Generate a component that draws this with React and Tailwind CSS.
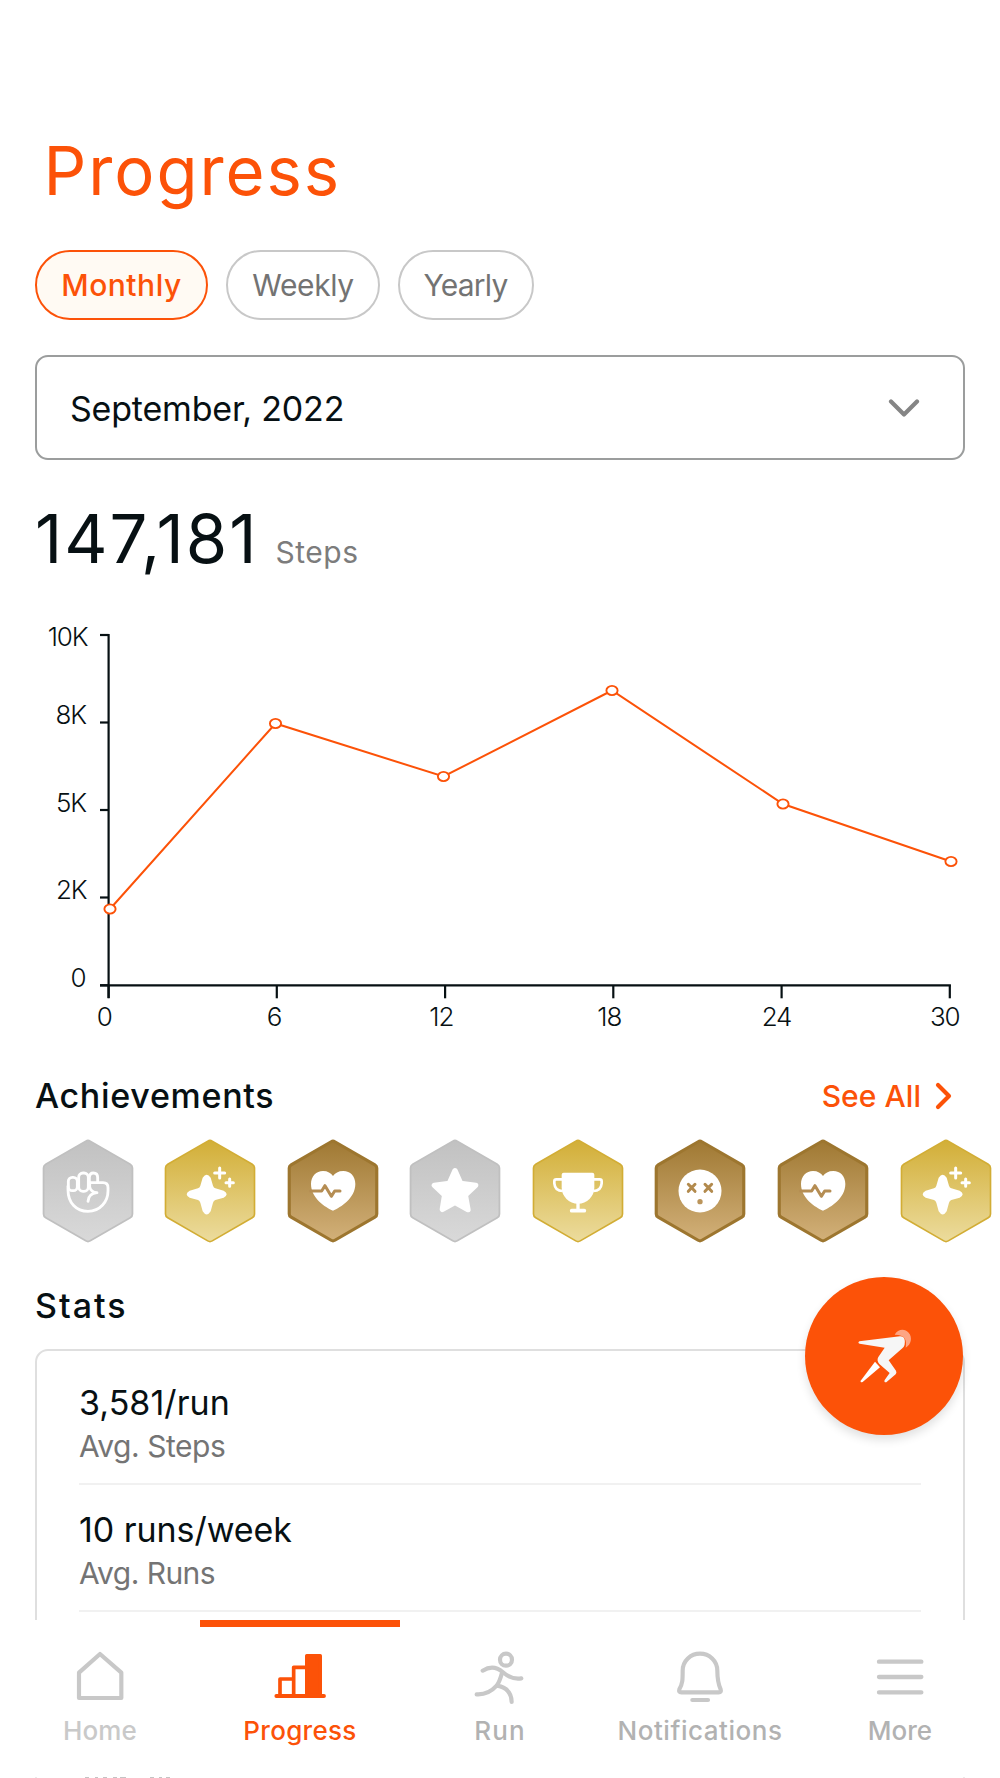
import React from "react";

const POINTS = [
  [110, 909],
  [275.5, 723.5],
  [443.5, 776.5],
  [612, 690.5],
  [783, 804],
  [951, 861.5],
];

const Y_TICKS = [
  { y: 635, ty: 645.5, x: 87.5, label: "10K" },
  { y: 722.5, ty: 724, x: 86, label: "8K" },
  { y: 810, ty: 811.5, x: 86, label: "5K" },
  { y: 897.5, ty: 899, x: 86.5, label: "2K" },
  { y: 985.3, ty: 986.5, x: 85.5, label: "0" },
];

const X_TICKS = [
  { x: 108.6, tx: 104.3, label: "0" },
  { x: 276.8, tx: 274, label: "6" },
  { x: 445.1, tx: 441.3, label: "12" },
  { x: 613.3, tx: 609.3, label: "18" },
  { x: 781.6, tx: 776.5, label: "24" },
  { x: 949.8, tx: 944.7, label: "30" },
];

function Chart() {
  return (
    <svg className="block h-[440px] w-full" viewBox="0 600 1000 440">
      <g stroke="#071013" strokeWidth="2.2" fill="none">
        <path d="M108.6 634V998M100 985.3H950.9" />
        {Y_TICKS.map((t) => (
          <path key={t.label} d={`M100 ${t.y}H108.6`} />
        ))}
        {X_TICKS.map((t) => (
          <path key={t.label} d={`M${t.x} 985.3V998.3`} />
        ))}
      </g>
      <g fill="#071013" fontSize="26" fontWeight="300" letterSpacing="-1.1">
        {Y_TICKS.map((t) => (
          <text key={t.label} x={t.x} y={t.ty} textAnchor="end">
            {t.label}
          </text>
        ))}
        {X_TICKS.map((t) => (
          <text key={t.label} x={t.tx} y="1026" textAnchor="middle">
            {t.label}
          </text>
        ))}
      </g>
      <polyline points={POINTS.map((p) => p.join(",")).join(" ")} fill="none" stroke="#FC5208" strokeWidth="2" />
      {POINTS.map(([x, y]) => (
        <ellipse key={x} cx={x} cy={y} rx="5.6" ry="4.6" fill="#fff" stroke="#FC5208" strokeWidth="1.9" />
      ))}
    </svg>
  );
}

const FistIcon = (
  <g transform="translate(-263 -394)" fill="none" stroke="#fff" strokeWidth="8.500" strokeLinecap="round" strokeLinejoin="round">
    <rect x="204" y="353" width="27" height="40" rx="12" />
    <rect x="235" y="340" width="29" height="55" rx="13" />
    <path d="M267 368V353Q268 340 279 340Q292 340 292 354V368" />
    <path d="M203 380V390C203 430 228 455 263 455C300 455 323 425 323 394V384Q323 369 308 369H267" />
    <path d="M268 372V382Q272 398 290 399Q264 402 263 425" />
  </g>
);

const SparkleIcon = (
  <g transform="translate(-631 -394)">
    <path
      fill="#fff"
      d="M609 354Q621 336 633 354L640 378Q642 384 647 386L672 393Q690 404 672 414L647 421Q642 423 640 429L633 455Q621 474 609 455L602 429Q600 423 595 421L570 414Q552 404 570 393L595 386Q600 384 602 378Z"
    />
    <path d="M660 325V355M645 340H675M690 358V380M679 369.500H701" stroke="#fff" strokeWidth="9" strokeLinecap="round" />
  </g>
);

const HeartIcon = (
  <g transform="translate(-998 -394)">
    <path
      fill="#fff"
      d="M998 453C975 443 932 416 932 373C932 350 948 334 968 334C982 334 992 340 998 349C1004 340 1014 334 1029 334C1050 334 1065 350 1065 373C1065 416 1021 443 998 453Z"
    />
    <path d="M931 394H964L974 378L993 410L1003 394H1019" fill="none" stroke="#b58d53" strokeWidth="9" strokeLinecap="round" strokeLinejoin="round" />
  </g>
);

const StarIcon = (
  <g transform="translate(-166 -214)">
    <path
      d="M166 153L183 191L228 197L197 226L205 270L166 248L128 269L135 226L104 197L149 191Z"
      fill="#fff"
      stroke="#fff"
      strokeWidth="16"
      strokeLinejoin="round"
    />
  </g>
);

const TrophyIcon = (
  <g transform="translate(-534 -214)">
    <path fill="#fff" d="M485 165Q485 159 491 159H577Q583 159 583 165V203A49 49 0 0 1 485 203Z" />
    <path
      d="M488 179H469Q463 179 463 185V191Q465 214 488 214M580 179H599Q605 179 605 185V191Q603 214 580 214"
      fill="none"
      stroke="#fff"
      strokeWidth="8"
    />
    <path d="M534 245V272" stroke="#fff" strokeWidth="10" />
    <path d="M515 273H553" stroke="#fff" strokeWidth="11" strokeLinecap="round" />
  </g>
);

const FaceIcon = (
  <g transform="translate(-902 -214)">
    <circle cx="902" cy="214" r="64.500" fill="#fff" />
    <path d="M867 194L887 215M887 194L867 215M917 194L937 215M937 194L917 215" stroke="#b28a4d" strokeWidth="9" strokeLinecap="round" />
    <circle cx="902" cy="246" r="8" fill="#bb955b" />
  </g>
);

const METALS = {
  silver: { edge: "#c0c0c0", top: "#c1c1c1", bottom: "#d9d9d9", rim: 11 },
  gold: { edge: "#d2ad35", top: "#d2ae36", bottom: "#ecdc9e", rim: 10 },
  bronze: { edge: "#9d762f", top: "#9f7832", bottom: "#d3b17a", rim: 19 },
};

const HEX = "0,-138 120,-68.7 120,68.7 0,138 -120,68.7 -120,-68.7";

function Badge({ metal, icon, id }) {
  const m = METALS[metal];
  return (
    <svg className="h-[104px] w-[92px] shrink-0" viewBox="-138 -156 276 312">
      <defs>
        <linearGradient id={id} gradientUnits="userSpaceOnUse" x1="0" y1="-154" x2="0" y2="154">
          <stop offset="0" stopColor={m.top} />
          <stop offset="1" stopColor={m.bottom} />
        </linearGradient>
      </defs>
      <polygon points={HEX} fill={m.edge} stroke={m.edge} strokeWidth="32" strokeLinejoin="round" />
      <polygon points={HEX} fill={`url(#${id})`} stroke={`url(#${id})`} strokeWidth={32 - m.rim} strokeLinejoin="round" />
      {icon}
    </svg>
  );
}

const BADGES = [
  ["silver", FistIcon],
  ["gold", SparkleIcon],
  ["bronze", HeartIcon],
  ["silver", StarIcon],
  ["gold", TrophyIcon],
  ["bronze", FaceIcon],
  ["bronze", HeartIcon],
  ["gold", SparkleIcon],
];

function Stat({ value, label, valueClass, labelClass }) {
  return (
    <div className="h-[127px] border-b-2 border-[#f1f1f1] pt-[25px]">
      <div className={`h-[40px] text-[34px] leading-[40px] font-normal whitespace-nowrap ${valueClass}`}>{value}</div>
      <div className={`mt-[4px] h-[38px] text-[30px] leading-[38px] font-normal whitespace-nowrap text-[#747474] ${labelClass}`}>{label}</div>
    </div>
  );
}

function NavItem({ label, labelClass, viewBox, active, children }) {
  return (
    <div className="flex w-[200px] flex-col items-center">
      <div className={active ? "h-[7px] w-full bg-[#FC5208]" : "h-[7px] w-full"} />
      <svg
        className="mt-[18px] h-[60px] w-[60px]"
        viewBox={viewBox}
        fill="none"
        stroke={active ? "#FC5208" : "#c8c8c8"}
        strokeWidth="12.500"
        strokeLinecap="round"
        strokeLinejoin="round"
      >
        {children}
      </svg>
      <div className={`mt-[10px] h-[32px] text-[26px] leading-[32px] font-medium whitespace-nowrap ${labelClass}`}>{label}</div>
    </div>
  );
}

export default function App() {
  return (
    <div className="relative flex h-[1778px] w-[1000px] flex-col overflow-hidden bg-white font-['Inter','Liberation_Sans',sans-serif] text-[#071013]">
      <main className="flex h-[1620px] shrink-0 flex-col overflow-hidden pt-[131px]">
        <h1 className="ml-[43.500px] h-[80px] shrink-0 text-[67px] leading-[80px] font-normal tracking-[1.95px] text-[#FC5208]">Progress</h1>

        <div className="mt-[39px] ml-[35px] flex h-[70px] shrink-0 gap-[18px] text-[30px]">
          <div className="flex w-[173px] items-center justify-center rounded-[35px] border-2 border-[#FC5208] bg-[#fffaf3] font-medium tracking-[0.5px] text-[#FC5208]">
            Monthly
          </div>
          <div className="flex w-[154px] items-center justify-center rounded-[35px] border-2 border-[#c8c8c8] font-normal tracking-[-0.4px] text-[#737373]">
            Weekly
          </div>
          <div className="flex w-[136px] items-center justify-center rounded-[35px] border-2 border-[#c8c8c8] pr-[1px] font-normal tracking-[-0.8px] text-[#737373]">
            Yearly
          </div>
        </div>

        <div className="mx-[35px] mt-[35px] flex h-[105px] shrink-0 items-center justify-between rounded-[13px] border-2 border-[#9b9d9d] pt-[2px] pr-[42px] pl-[33px]">
          <span className="text-[34px] leading-[40px] tracking-[-0.2px]">September, 2022</span>
          <svg className="h-[20px] w-[34px]" viewBox="0 0 34 20" fill="none" stroke="#858585" strokeWidth="4.200" strokeLinecap="round" strokeLinejoin="round">
            <path d="M4 2.500L17 15.500L30 2.500" />
          </svg>
        </div>

        <div className="mt-[39px] ml-[35px] flex h-[80px] shrink-0 items-baseline">
          <span className="w-[240.500px] text-[67px] leading-[80px] tracking-[2px]">147,181</span>
          <span className="text-[30px] leading-[40px] font-normal tracking-[0.5px] text-[#7c7c7c]">Steps</span>
        </div>

        <div className="mt-[21px] h-[440px] shrink-0">
          <Chart />
        </div>

        <div className="mt-[36px] mr-[48px] ml-[35px] flex h-[40px] shrink-0 items-center justify-between">
          <h2 className="text-[34px] leading-[40px] font-medium tracking-[0.7px]">Achievements</h2>
          <div className="flex items-center gap-[13px] text-[#FC5208]">
            <span className="text-[30px] leading-[40px] font-medium tracking-[0.05px]">See All</span>
            <svg className="h-[28px] w-[18px]" viewBox="0 0 18 28" fill="none" stroke="currentColor" strokeWidth="4.200" strokeLinecap="round" strokeLinejoin="round">
              <path d="M4 3L15 14L4 25" />
            </svg>
          </div>
        </div>

        <div className="mt-[23px] ml-[41.500px] flex h-[104px] shrink-0 gap-[30.600px]">
          {BADGES.map(([metal, icon], i) => (
            <Badge key={i} id={`metal-${i}`} metal={metal} icon={icon} />
          ))}
        </div>

        <h2 className="mt-[43px] ml-[35px] h-[40px] shrink-0 text-[34px] leading-[40px] font-medium tracking-[2px]">Stats</h2>

        <section className="mx-[35px] mt-[23px] h-[400px] shrink-0 rounded-[13px] border-2 border-[#dfdfdf] px-[42px] pt-[7px]">
          <Stat value="3,581/run" label="Avg. Steps" valueClass="tracking-[0.05px]" labelClass="tracking-[-0.45px]" />
          <Stat value="10 runs/week" label="Avg. Runs" valueClass="tracking-[-0.05px]" labelClass="tracking-[-0.55px]" />
        </section>
      </main>

      <button className="absolute top-[1277px] left-[805px] flex h-[158px] w-[158px] items-center justify-center rounded-full bg-[#FC5208] shadow-[0_5px_10px_rgba(0,0,0,0.12)]">
        <svg className="h-[60px] w-[60px]" viewBox="462 618 180 180">
          <path fill="#fda584" d="M584 644C593 627 614 624 626 638C638 652 634 673 617 683C621 660 616 644 584 644Z" />
          <path
            fill="#f6f6f6"
            d="M478 664L600 649Q611 649 614 659Q617 676 607 685L566 721L588 752Q591 758 587 763L559 787Q551 788 554 780L569 759L538 732Q529 722 535 711L554 683L479 671Q472 669 478 664Z"
          />
          <path fill="#fff" d="M525 725L540 742L488 786Q480 789 482 782Z" />
        </svg>
      </button>

      <nav className="flex h-[156px] shrink-0 bg-white">
        <NavItem label="Home" viewBox="210 135 180 180" labelClass="text-[#c9c9c9] tracking-[0.1px]">
          <path d="M237 218L300 162L364 218V294H237Z" />
        </NavItem>
        <NavItem label="Progress" viewBox="810 135 180 180" active labelClass="text-[#FC5208] tracking-[0.3px]">
          <path d="M840 288V237H880M881 288V202H918" strokeWidth="11" />
          <path d="M829 288H972" strokeWidth="11.500" />
          <rect x="920" y="167" width="41" height="118" fill="#FC5208" strokeWidth="10" />
        </NavItem>
        <NavItem label="Run" viewBox="210 135 180 180" labelClass="text-[#b2b2b2] tracking-[1.2px]">
          <circle cx="318" cy="179" r="18" />
          <path d="M248 212Q280 192 308 216Q335 240 364 235M306 218Q299 245 290 257Q265 285 230 283M292 257Q334 265 335 306" />
        </NavItem>
        <NavItem label="Notifications" viewBox="810 135 180 180" labelClass="text-[#b2b2b2] tracking-[0.54px]">
          <path d="M900 161C928 161 952 182 952 212C952 240 954 250 962 268Q965 277 956 277H844Q835 277 838 268C848 250 848 240 848 212C848 182 872 161 900 161Z" />
          <path d="M877 300H924" />
        </NavItem>
        <NavItem label="More" viewBox="270 165 180 180" labelClass="text-[#b2b2b2]">
          <path d="M297 215H424M297 261H424M297 307H424" strokeWidth="13" />
        </NavItem>
      </nav>

      <svg className="h-[2px] w-full shrink-0" viewBox="0 1776 1000 2">
        <path
          d="M85 1777.500H89M95 1777.500H98M103 1777.500H107M113 1777.500H117M120 1777.500H126M150 1777.500H154M159 1777.500H162M166 1777.500H170"
          stroke="#c4c4c4"
          strokeWidth="1"
        />
        <path d="M35 1777.500H37M963 1777.500H965" stroke="#ebebeb" strokeWidth="1" />
      </svg>
    </div>
  );
}
